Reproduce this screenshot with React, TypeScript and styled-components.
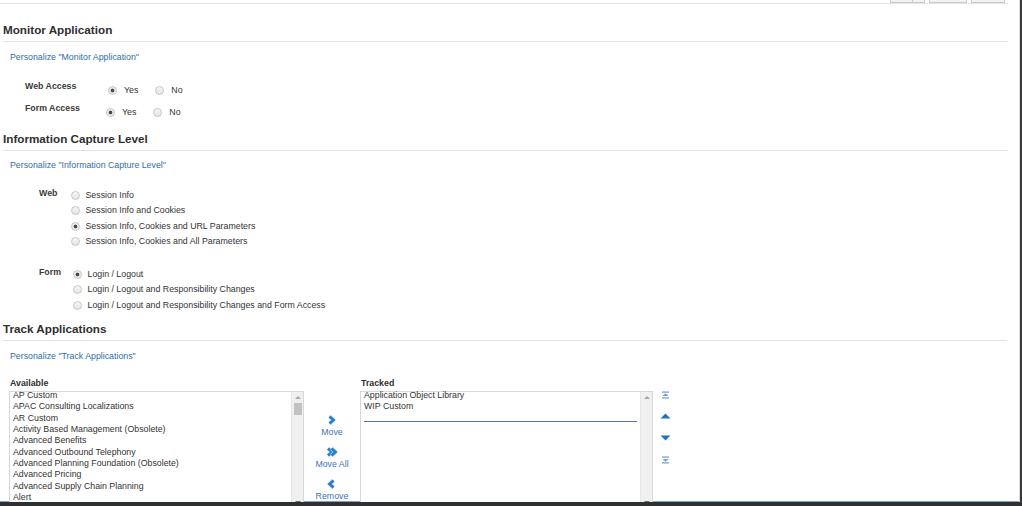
import React from 'react';
import styled, { createGlobalStyle } from 'styled-components';

const GlobalStyle = createGlobalStyle`
    html, body {
        margin: 0;
        padding: 0;
        background: #ffffff;
    }
    body {
        font-family: 'Liberation Sans', Arial, sans-serif;
        font-size: 8.8px;
        color: #333333;
    }
`;

const available = [
    'AP Custom',
    'APAC Consulting Localizations',
    'AR Custom',
    'Activity Based Management (Obsolete)',
    'Advanced Benefits',
    'Advanced Outbound Telephony',
    'Advanced Planning Foundation (Obsolete)',
    'Advanced Pricing',
    'Advanced Supply Chain Planning',
    'Alert',
];

const tracked = ['Application Object Library', 'WIP Custom'];

interface OptionProps {
    label: string;
    checked?: boolean;
}

const Option: React.FC<OptionProps> = ({ label, checked }) => (
    <OptionRow>
        <Radio $checked={checked} />
        <span>{label}</span>
    </OptionRow>
);

const Chevron: React.FC<{ dir: 'right' | 'left'; double?: boolean }> = ({ dir, double }) => {
    const one = dir === 'right' ? 'M2 1.5 L6 5 L2 8.5' : 'M6 1.5 L2 5 L6 8.5';
    const two = dir === 'right' ? 'M5.5 1.5 L9.5 5 L5.5 8.5' : 'M9.5 1.5 L5.5 5 L9.5 8.5';
    return (
        <svg width={double ? 12 : 9} height="10" viewBox={double ? '0 0 12 10' : '0 0 8 10'}>
            <path d={one} fill="none" stroke="#bcd6ef" strokeWidth="4" strokeLinejoin="round" />
            <path d={one} fill="none" stroke="#2a7ccc" strokeWidth="2.6" strokeLinejoin="miter" />
            {double && (
                <>
                    <path d={two} fill="none" stroke="#bcd6ef" strokeWidth="4" strokeLinejoin="round" />
                    <path d={two} fill="none" stroke="#2a7ccc" strokeWidth="2.6" strokeLinejoin="miter" />
                </>
            )}
        </svg>
    );
};

const ReorderIcon: React.FC<{ kind: 'top' | 'up' | 'down' | 'bottom' }> = ({ kind }) => {
    if (kind === 'up') {
        return (
            <svg width="11" height="8" viewBox="0 0 11 8">
                <path d="M0.5 6.5 L5.5 1.5 L10.5 6.5 Z" fill="#1f74c4" />
            </svg>
        );
    }
    if (kind === 'down') {
        return (
            <svg width="11" height="8" viewBox="0 0 11 8">
                <path d="M0.5 1.5 L5.5 6.5 L10.5 1.5 Z" fill="#1f74c4" />
            </svg>
        );
    }
    const flip = kind === 'bottom';
    return (
        <svg width="9" height="8" viewBox="0 0 9 8" style={flip ? { transform: 'scaleY(-1)' } : undefined}>
            <rect x="1" y="0.5" width="7" height="1.2" fill="#6f9dcc" />
            <path d="M1.5 5 L4.5 2.2 L7.5 5 Z" fill="#6f9dcc" />
            <rect x="1" y="6.3" width="7" height="1.2" fill="#6f9dcc" />
        </svg>
    );
};

const Scrollbar: React.FC<{ thumb?: boolean }> = ({ thumb }) => (
    <ScrollTrack>
        <ScrollArrow $up />
        {thumb && <Thumb />}
        <Spacer />
        <ScrollArrow />
    </ScrollTrack>
);

const App: React.FC = () => {
    return (
        <Frame>
            <GlobalStyle />
            <TopBar>
                <StubButton $width={35} $split />
                <StubButton $width={38} />
                <StubButton $width={34} />
            </TopBar>

            <Section $top={19}>
                <Heading>Monitor Application</Heading>
                <Personalize>Personalize "Monitor Application"</Personalize>
                <AccessTable>
                    <AccessRow>
                        <AccessLabel>Web Access</AccessLabel>
                        <Choices $indent={83}>
                            <Option label="Yes" checked />
                            <Option label="No" />
                        </Choices>
                    </AccessRow>
                    <AccessRow>
                        <AccessLabel>Form Access</AccessLabel>
                        <Choices $indent={81}>
                            <Option label="Yes" checked />
                            <Option label="No" />
                        </Choices>
                    </AccessRow>
                </AccessTable>
            </Section>

            <Section $top={13.5}>
                <Heading>Information Capture Level</Heading>
                <Personalize>Personalize "Information Capture Level"</Personalize>
                <LevelGroup $top={16.5} $labelWidth={31.5}>
                    <LevelLabel>Web</LevelLabel>
                    <LevelList>
                        <Option label="Session Info" />
                        <Option label="Session Info and Cookies" />
                        <Option label="Session Info, Cookies and URL Parameters" checked />
                        <Option label="Session Info, Cookies and All Parameters" />
                    </LevelList>
                </LevelGroup>
                <LevelGroup $top={17} $labelWidth={33.5}>
                    <LevelLabel>Form</LevelLabel>
                    <LevelList>
                        <Option label="Login / Logout" checked />
                        <Option label="Login / Logout and Responsibility Changes" />
                        <Option label="Login / Logout and Responsibility Changes and Form Access" />
                    </LevelList>
                </LevelGroup>
            </Section>

            <Section $top={9}>
                <Heading>Track Applications</Heading>
                <Personalize>Personalize "Track Applications"</Personalize>
                <Shuttle>
                    <ColumnLabel>Available</ColumnLabel>
                    <div />
                    <ColumnLabel>Tracked</ColumnLabel>
                    <div />
                    <ListBox>
                        <ListItems>
                            {available.map((name) => (
                                <ListItem key={name}>{name}</ListItem>
                            ))}
                        </ListItems>
                        <Scrollbar thumb />
                    </ListBox>
                    <MoveColumn>
                        <MoveButton>
                            <Chevron dir="right" />
                            <MoveText>Move</MoveText>
                        </MoveButton>
                        <MoveButton>
                            <Chevron dir="right" double />
                            <MoveText>Move All</MoveText>
                        </MoveButton>
                        <MoveButton>
                            <Chevron dir="left" />
                            <MoveText>Remove</MoveText>
                        </MoveButton>
                    </MoveColumn>
                    <ListBox>
                        <ListItems>
                            {tracked.map((name) => (
                                <ListItem key={name}>{name}</ListItem>
                            ))}
                            <EmptyRule />
                        </ListItems>
                        <Scrollbar />
                    </ListBox>
                    <ReorderColumn>
                        <ReorderIcon kind="top" />
                        <ReorderIcon kind="up" />
                        <ReorderIcon kind="down" />
                        <ReorderIcon kind="bottom" />
                    </ReorderColumn>
                </Shuttle>
            </Section>
        </Frame>
    );
};

export default App;

const Frame = styled.div`
    width: 1022px;
    height: 506px;
    box-sizing: border-box;
    overflow: hidden;
    background: #ffffff;
    border-right: 2px solid #3a3a3c;
    border-bottom: 4px solid #2f3033;
    box-shadow: inset -1px 0 0 #d8d8d8, inset 0 -1px 0 #7fa2bf;
    display: flex;
    flex-direction: column;
`;

const TopBar = styled.div`
    height: 4px;
    margin-right: 12px;
    padding-right: 3px;
    border-bottom: 1px solid #dfe6ec;
    display: flex;
    justify-content: flex-end;
    align-items: flex-start;
    gap: 4px;
`;

const StubButton = styled.div<{ $width: number; $split?: boolean }>`
    width: ${(p) => p.$width}px;
    height: 3px;
    box-sizing: border-box;
    border: 1px solid #c8cbce;
    border-top: none;
    background: ${(p) =>
        p.$split ? 'linear-gradient(90deg, #f2f2f2 65%, #c8cbce 65%, #c8cbce 68%, #f2f2f2 68%)' : '#f2f2f2'};
`;

const Section = styled.section<{ $top: number }>`
    margin-top: ${(p) => p.$top}px;
    display: flex;
    flex-direction: column;
`;

const Heading = styled.h2`
    margin: 0 13px 0 3px;
    padding: 0 0 4px 0;
    font-size: 11.7px;
    line-height: 14px;
    font-weight: bold;
    color: #2f2f2f;
    border-bottom: 1px solid #dde4ea;
`;

const Personalize = styled.a`
    margin: 9.5px 0 0 10px;
    font-size: 8.8px;
    line-height: 11px;
    color: #2f6ea8;
    cursor: pointer;
`;

const AccessTable = styled.div`
    margin-top: 18px;
    margin-left: 25px;
    display: flex;
    flex-direction: column;
    gap: 7.5px;
`;

const AccessRow = styled.div`
    display: flex;
    align-items: flex-start;
`;

const AccessLabel = styled.div`
    width: 0;
    white-space: nowrap;
    font-weight: bold;
    line-height: 11px;
    color: #3a3a3a;
`;

const Choices = styled.div<{ $indent: number }>`
    margin-left: ${(p) => p.$indent}px;
    margin-top: 4px;
    display: flex;
    gap: 17px;
`;

const OptionRow = styled.label`
    display: flex;
    align-items: center;
    gap: 7px;
    line-height: 11px;
    color: #333333;
    white-space: nowrap;
`;

const Radio = styled.span<{ $checked?: boolean }>`
    width: 9px;
    height: 9px;
    box-sizing: border-box;
    border-radius: 50%;
    border: 1px solid #c6c6c6;
    background: ${(p) =>
        p.$checked
            ? 'radial-gradient(circle, #4a4a4a 0, #4a4a4a 1.6px, #e8e8e8 2.2px, #f3f3f3 100%)'
            : 'linear-gradient(#f6f6f6, #e4e4e4)'};
    flex-shrink: 0;
`;

const LevelGroup = styled.div<{ $top: number; $labelWidth: number }>`
    margin-top: ${(p) => p.$top}px;
    margin-left: 39px;
    display: grid;
    grid-template-columns: ${(p) => p.$labelWidth}px auto;
    align-items: start;
`;

const LevelLabel = styled.div`
    font-weight: bold;
    line-height: 11px;
    color: #3a3a3a;
`;

const LevelList = styled.div`
    display: flex;
    flex-direction: column;
    & > label {
        line-height: 15.5px;
        gap: 6px;
    }
`;

const Shuttle = styled.div`
    margin-top: 16.5px;
    margin-left: 9px;
    display: grid;
    grid-template-columns: 295px 56px 293px auto;
    grid-template-rows: 11px auto;
    row-gap: 1.5px;
    align-items: start;
`;

const ColumnLabel = styled.div`
    font-weight: bold;
    line-height: 11px;
    color: #2f2f2f;
    padding-left: 1px;
`;

const ListBox = styled.div`
    height: 140px;
    box-sizing: border-box;
    border: 1px solid #d6d9dc;
    display: flex;
    background: #ffffff;
`;

const ListItems = styled.div`
    flex: 1;
    margin-top: -1.5px;
    padding: 0 3px 0 3px;
    display: flex;
    flex-direction: column;
`;

const ListItem = styled.div`
    line-height: 11.35px;
    color: #333333;
    white-space: nowrap;
`;

const EmptyRule = styled.div`
    margin: 8px 0 0 0;
    height: 0;
    border-top: 1px solid #52779a;
`;

const ScrollTrack = styled.div`
    width: 11px;
    background: #f0f0f0;
    border-left: 1px solid #e6e6e6;
    display: flex;
    flex-direction: column;
    align-items: center;
    padding: 4px 0 2px;
    height: 108px;
`;

const ScrollArrow = styled.div<{ $up?: boolean }>`
    width: 0;
    height: 0;
    border-left: 3px solid transparent;
    border-right: 3px solid transparent;
    ${(p) => (p.$up ? 'border-bottom: 3px solid #a8a8a8;' : 'border-top: 3px solid #6a6a6a;')}
`;

const Thumb = styled.div`
    margin-top: 4px;
    width: 8px;
    height: 12px;
    background: #c2c2c2;
`;

const Spacer = styled.div`
    flex: 1;
`;

const MoveColumn = styled.div`
    padding-top: 24.5px;
    display: flex;
    flex-direction: column;
    align-items: center;
    gap: 9.5px;
`;

const MoveButton = styled.div`
    display: flex;
    flex-direction: column;
    align-items: center;
    gap: 1.5px;
    cursor: pointer;
`;

const MoveText = styled.span`
    line-height: 11px;
    color: #3d77b0;
`;

const ReorderColumn = styled.div`
    padding: 0 0 0 7px;
    width: 11px;
    display: flex;
    flex-direction: column;
    align-items: center;
    gap: 13.8px;
`;
